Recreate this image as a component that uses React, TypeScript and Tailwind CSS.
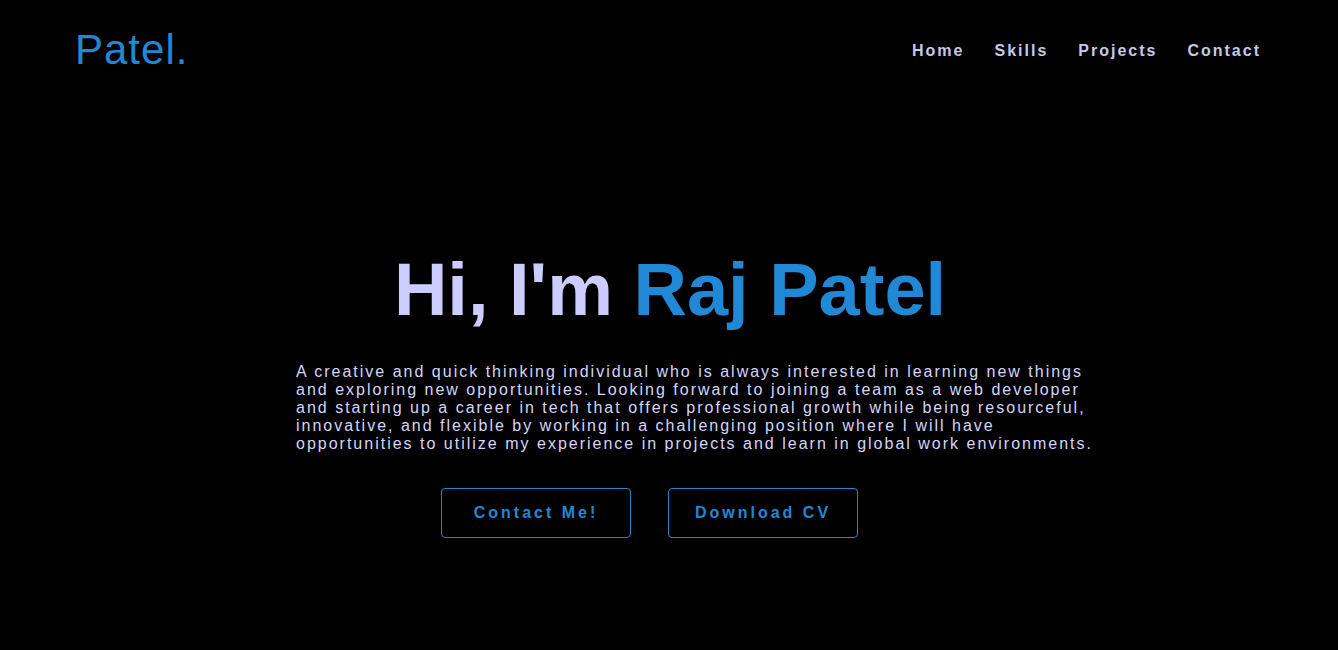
import React from 'react';

const navLinks = ['Home', 'Skills', 'Projects', 'Contact'];

const App: React.FC = () => {
    return (
        <div className="min-h-[650px] bg-black font-['Liberation_Sans',Arial,sans-serif]">
            {/* navbar */}
            <nav className="flex justify-between items-center pl-[75px] pr-[77px] pt-[26px]">
                <h1 className="text-[42px] leading-[48px] text-[#2188d6] tracking-[1px]">Patel.</h1>
                <ul className="flex gap-[30px] pt-[1px]">
                    {navLinks.map((link) => (
                        <li key={link}>
                            <a href="#" className="text-[16px] font-bold tracking-[2px] text-[#c6c9ea]">
                                {link}
                            </a>
                        </li>
                    ))}
                </ul>
            </nav>

            {/* hero */}
            <section className="flex flex-col items-center pt-[176px]">
                <h2 className="text-[74px] leading-[80px] font-bold text-[#ccccff] pl-[2px]">
                    Hi, I'm <span className="text-[#2188d6]">Raj Patel</span>
                </h2>
                <p className="self-start ml-[296px] w-[800px] mt-[33px] text-[16px] leading-[18px] tracking-[2px] text-[#d4d6fb]">
                    A creative and quick thinking individual who is always interested in learning new things
                    and exploring new opportunities. Looking forward to joining a team as a web developer
                    and starting up a career in tech that offers professional growth while being resourceful,
                    innovative, and flexible by working in a challenging position where I will have
                    opportunities to utilize my experience in projects and learn in global work environments.
                </p>
                <div className="flex gap-[37px] mt-[35px] mr-[39px]">
                    <button className="w-[190px] h-[50px] border border-[#2188d6] rounded-[4px] text-[#2188d6] text-[16px] font-bold tracking-[3px]">
                        Contact Me!
                    </button>
                    <button className="w-[190px] h-[50px] border border-[#2188d6] rounded-[4px] text-[#2188d6] text-[16px] font-bold tracking-[3px]">
                        Download CV
                    </button>
                </div>
            </section>
        </div>
    );
};

export default App;
